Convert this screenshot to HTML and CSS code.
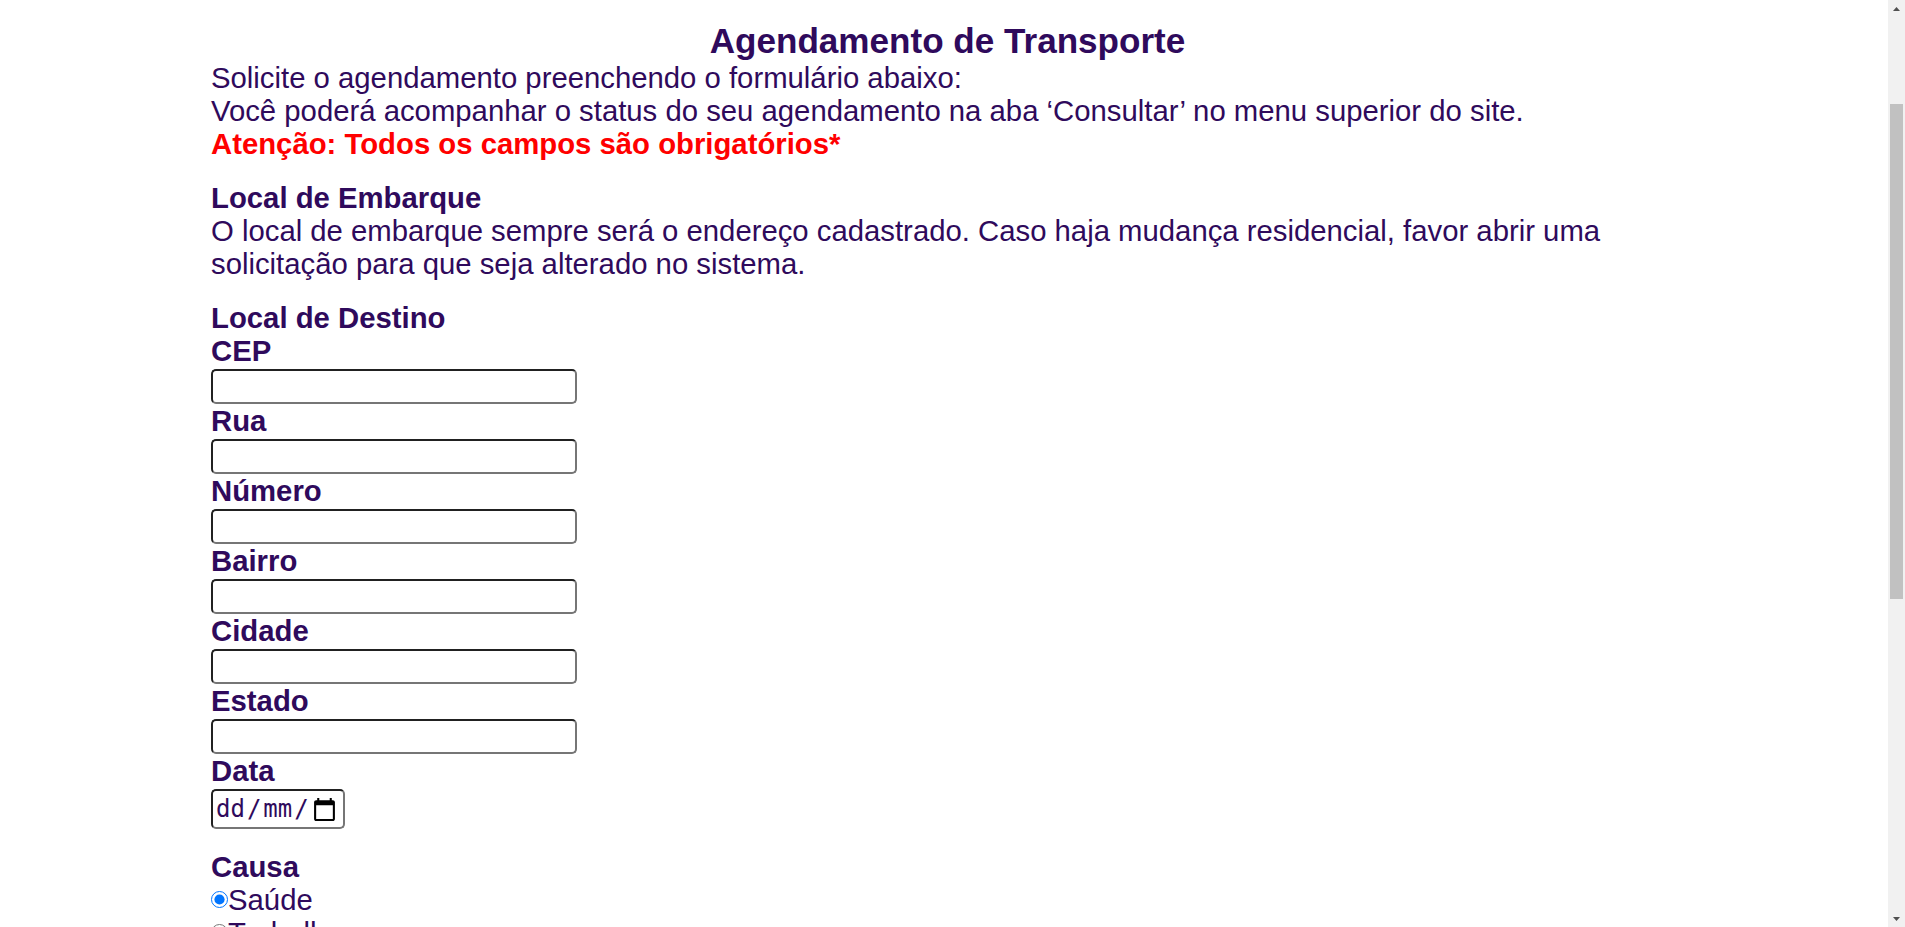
FILE: index.html
```html
<!DOCTYPE html>
<html lang="pt-BR">
<head>
<meta charset="utf-8">
<title>Agendamento de Transporte</title>
<link rel="stylesheet" href="styles.css">
</head>
<body>
<header class="site-header">
  <nav class="menu">
    <a class="menu-link" href="#">Início</a>
    <a class="menu-link" href="#">Agendar</a>
    <a class="menu-link" href="#">Consultar</a>
    <a class="menu-link" href="#">Sair</a>
  </nav>
</header>
<main class="page">
  <h1 class="title">Agendamento de Transporte</h1>
  <div class="intro">
    <p class="line">Solicite o agendamento preenchendo o formulário abaixo:</p>
    <p class="line">Você poderá acompanhar o status do seu agendamento na aba ‘Consultar’ no menu superior do site.</p>
    <p class="line alert">Atenção: Todos os campos são obrigatórios*</p>
  </div>
  <section class="block">
    <h2 class="label">Local de Embarque</h2>
    <p class="line">O local de embarque sempre será o endereço cadastrado. Caso haja mudança residencial, favor abrir uma solicitação para que seja alterado no sistema.</p>
  </section>
  <form class="form block">
    <h2 class="label">Local de Destino</h2>
    <div class="field">
      <label class="label" for="cep">CEP</label>
      <input class="text-input" id="cep" type="text">
    </div>
    <div class="field">
      <label class="label" for="rua">Rua</label>
      <input class="text-input" id="rua" type="text">
    </div>
    <div class="field">
      <label class="label" for="numero">Número</label>
      <input class="text-input" id="numero" type="text">
    </div>
    <div class="field">
      <label class="label" for="bairro">Bairro</label>
      <input class="text-input" id="bairro" type="text">
    </div>
    <div class="field">
      <label class="label" for="cidade">Cidade</label>
      <input class="text-input" id="cidade" type="text">
    </div>
    <div class="field">
      <label class="label" for="estado">Estado</label>
      <input class="text-input" id="estado" type="text">
    </div>
    <div class="field">
      <label class="label" for="data">Data</label>
      <div class="date-input" id="data" role="group" aria-label="Data">
        <span class="date-seg">dd</span><span class="date-sep">/</span><span class="date-seg">mm</span><span class="date-sep">/</span>
        <svg class="cal-icon" viewBox="0 0 24 24" width="24" height="24" aria-hidden="true">
          <path d="M20 3h-1V1h-2v2H7V1H5v2H4c-1.1 0-2 .9-2 2v16c0 1.1.9 2 2 2h16c1.1 0 2-.9 2-2V5c0-1.1-.9-2-2-2zm0 18H4V8h16v13z" fill="#000"/>
        </svg>
      </div>
    </div>
    <fieldset class="radio-group">
      <legend class="label">Causa</legend>
      <label class="radio"><input class="radio-input" type="radio" name="causa" checked>Saúde</label>
      <label class="radio"><input class="radio-input" type="radio" name="causa">Trabalho</label>
      <label class="radio"><input class="radio-input" type="radio" name="causa">Estudo</label>
      <label class="radio"><input class="radio-input" type="radio" name="causa">Outros</label>
    </fieldset>
    <div class="field block">
      <label class="label" for="horario">Horário</label>
      <input class="text-input short" id="horario" type="text">
    </div>
    <div class="field block">
      <label class="label" for="obs">Observações</label>
      <textarea class="text-area" id="obs"></textarea>
    </div>
    <button class="submit" type="button">Agendar</button>
  </form>
</main>
<footer class="site-footer">
  <p class="footer-text">Sistema de Agendamento de Transporte</p>
</footer>
<div class="scrollbar" aria-hidden="true">
  <span class="sb-arrow">
    <svg width="7" height="4" viewBox="0 0 7 4"><path d="M0 4L3.5 0L7 4z" fill="#505050"/></svg>
  </span>
  <span class="sb-track"><span class="sb-thumb"></span></span>
  <span class="sb-arrow">
    <svg width="7" height="4" viewBox="0 0 7 4"><path d="M0 0L3.5 4L7 0z" fill="#505050"/></svg>
  </span>
</div>
<script src="script.js"></script>
</body>
</html>
```

FILE: styles.css
```css
* {
  box-sizing: border-box;
}

html, body {
  margin: 0;
  padding: 0;
  background: #ffffff;
}

body {
  font-family: "Liberation Sans", Arial, sans-serif;
  font-size: 29.3px;
  color: #2f0a5c;
}

.site-header {
  height: 163px;
  display: flex;
  align-items: center;
  padding: 0 211px;
  background: #2f0a5c;
}

.menu {
  display: flex;
  gap: 40px;
}

.menu-link {
  color: #ffffff;
  text-decoration: none;
  font-size: 22px;
  font-weight: bold;
}

.page {
  display: flex;
  flex-direction: column;
  padding: 21px 221px 60px 211px;
}

.title {
  margin: 0;
  font-size: 35.1px;
  line-height: 40px;
  font-weight: bold;
  text-align: center;
}

.intro {
  display: flex;
  flex-direction: column;
}

.line {
  margin: 0;
  line-height: 33px;
}

.alert {
  color: #ff0000;
  font-weight: bold;
}

.block {
  margin-top: 21px;
}

.label {
  display: block;
  margin: 0;
  padding: 0;
  font-size: 29.3px;
  line-height: 33px;
  font-weight: bold;
}

.form {
  display: flex;
  flex-direction: column;
}

.field {
  display: flex;
  flex-direction: column;
  align-items: flex-start;
}

.text-input {
  margin: 2px 0 0 0;
  width: 366px;
  height: 35px;
  padding: 1px 4px;
  font: inherit;
  font-size: 22px;
  border: 2px inset #767676;
  border-radius: 5px;
  background: #ffffff;
}

.short {
  width: 200px;
}

.date-input {
  margin: 2px 0 0 0;
  width: 134px;
  height: 40px;
  padding: 0 6px 0 3px;
  display: flex;
  align-items: center;
  font-family: "DejaVu Sans Mono", monospace;
  font-size: 24px;
  color: #2f0a5c;
  border: 2px inset #767676;
  border-radius: 5px;
  background: #ffffff;
  overflow: hidden;
}

.date-seg {
  white-space: nowrap;
}

.date-sep {
  padding: 0 2px;
}

.cal-icon {
  width: 25px;
  height: 25px;
  margin-left: auto;
  flex: none;
}

.radio-group {
  margin: 21px 0 0 0;
  padding: 0;
  border: 0;
  display: flex;
  flex-direction: column;
}

.radio {
  display: flex;
  align-items: center;
  line-height: 33px;
}

.radio-input {
  width: 17px;
  height: 17px;
  margin: 0;
  accent-color: #0075ff;
}

.text-area {
  margin-top: 2px;
  width: 366px;
  height: 140px;
  font: inherit;
  font-size: 22px;
  border: 2px inset #767676;
  border-radius: 5px;
}

.submit {
  align-self: flex-start;
  margin-top: 30px;
  padding: 6px 24px;
  font: inherit;
  font-weight: bold;
  color: #ffffff;
  background: #2f0a5c;
  border: 0;
  border-radius: 4px;
}

.site-footer {
  height: 66px;
  display: flex;
  align-items: center;
  padding: 0 211px;
  background: #f2f0f6;
}

.footer-text {
  margin: 0;
  font-size: 18px;
}

/* browser scrollbar as shown in the reference */
.scrollbar {
  position: fixed;
  top: 0;
  right: 0;
  width: 17px;
  height: 100vh;
  display: flex;
  flex-direction: column;
  background: #f1f1f1;
}

.sb-arrow {
  height: 17px;
  flex: none;
  display: flex;
  align-items: center;
  justify-content: center;
}

.sb-track {
  flex: 1;
  padding-top: 87px;
}

.sb-thumb {
  display: block;
  height: 495px;
  margin: 0 2px;
  background: #c1c1c1;
}
```

FILE: script.js
```js
window.scrollTo(0, 163);
```
